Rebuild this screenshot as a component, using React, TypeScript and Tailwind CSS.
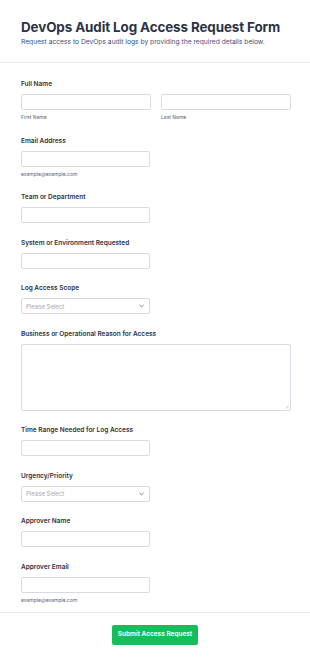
import React from "react";

const Label = ({ children }: { children: React.ReactNode }) => (
  <div className="text-[6.5px] leading-[10px] font-semibold text-[#2c3345]">{children}</div>
);

const Sub = ({ children }: { children: React.ReactNode }) => (
  <div className="mt-[4px] text-[5px] leading-[7px] text-[#57647e]">{children}</div>
);

const Input = ({ w = "w-[129px]" }: { w?: string }) => (
  <div className={`${w} h-[16px] rounded-[2px] border border-[#d8dae4] bg-white`} />
);

const Select = () => (
  <div className="w-[129px] h-[16px] rounded-[2px] border border-[#d8dae4] bg-white flex items-center justify-between pl-[4px] pr-[5px]">
    <span className="text-[6px] text-[#a0a7b8]">Please Select</span>
    <svg width="5" height="4" viewBox="0 0 10 6" fill="none">
      <path d="M1.5 1.5 L5 4.5 L8.5 1.5" stroke="#57647e" strokeWidth="1.6" strokeLinecap="round" strokeLinejoin="round" />
    </svg>
  </div>
);

const Field = ({ label, children }: { label: string; children: React.ReactNode }) => (
  <div className="flex flex-col">
    <Label>{label}</Label>
    <div className="mt-[5px]">{children}</div>
  </div>
);

export default function App() {
  return (
    <div className="w-[310px] h-[661px] bg-white overflow-hidden" style={{ fontFamily: "Inter, 'Noto Sans', sans-serif" }}>
      <div className="pl-[21px] pr-[19px] pt-[17px] pb-[16px] border-b border-[#e9eaee]">
        <h1 className="text-[13.4px] leading-[20px] font-bold text-[#2c3345] tracking-[-0.1px]">DevOps Audit Log Access Request Form</h1>
        <p className="text-[6.7px] leading-[8px] text-[#3e5079] mt-[1px]">Request access to DevOps audit logs by providing the required details below.</p>
      </div>
      <div className="pl-[21px] pr-[19px] pt-[16px] pb-[8px] flex flex-col gap-[14.5px] border-b border-[#e9eaee]">
        <Field label="Full Name">
          <div className="flex gap-[10px]">
            <div className="flex-1">
              <Input w="w-full" />
              <Sub>First Name</Sub>
            </div>
            <div className="flex-1">
              <Input w="w-full" />
              <Sub>Last Name</Sub>
            </div>
          </div>
        </Field>
        <Field label="Email Address">
          <Input />
          <Sub>example@example.com</Sub>
        </Field>
        <Field label="Team or Department">
          <Input />
        </Field>
        <Field label="System or Environment Requested">
          <Input />
        </Field>
        <Field label="Log Access Scope">
          <Select />
        </Field>
        <Field label="Business or Operational Reason for Access">
          <div className="relative w-full h-[67px] rounded-[2px] border border-[#d8dae4] bg-white">
            <svg className="absolute right-[1px] bottom-[1px]" width="4" height="4" viewBox="0 0 4 4">
              <path d="M3.5 0.5 L0.5 3.5 M3.5 2 L2 3.5" stroke="#b8bcc8" strokeWidth="0.6" />
            </svg>
          </div>
        </Field>
        <Field label="Time Range Needed for Log Access">
          <Input />
        </Field>
        <Field label="Urgency/Priority">
          <Select />
        </Field>
        <Field label="Approver Name">
          <Input />
        </Field>
        <Field label="Approver Email">
          <Input />
          <Sub>example@example.com</Sub>
        </Field>
      </div>
      <div className="flex justify-center pt-[12px]">
        <button className="h-[20px] w-[86px] rounded-[2px] bg-[#18bd5b] text-white text-[6.5px] font-semibold">Submit Access Request</button>
      </div>
    </div>
  );
}
